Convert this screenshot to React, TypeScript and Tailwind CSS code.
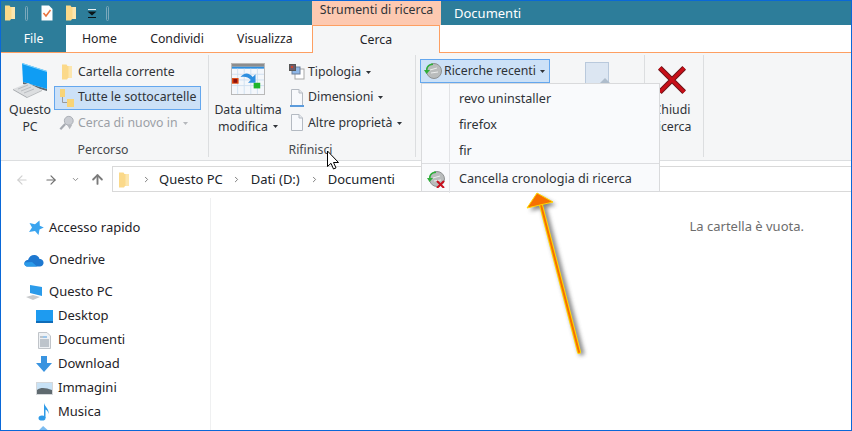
import type { ReactNode } from "react";
import { ArrowLeft, ArrowRight, ArrowUp, ChevronDown, ChevronRight } from "lucide-react";

function FolderIcon({ className = "w-[12px] h-[16px]" }: { className?: string }) {
  return (
    <svg viewBox="0 0 12 16" className={className} aria-hidden="true">
      <path d="M1 0.5 L5.5 0.5 L6.5 2 L11 2 L11 14 L7 14 L6 15.5 L1 15.5 Z" fill="#fbd98a" />
      <path d="M7.5 2 L11 2 L11 14 L7.5 14 Z" fill="#fce6ae" />
    </svg>
  );
}

function Caret({ className = "" }: { className?: string }) {
  return (
    <svg viewBox="0 0 5 3" className={`w-[5px] h-[3px] ${className}`} aria-hidden="true">
      <path d="M0 0 H5 L2.5 3 Z" fill="currentColor" />
    </svg>
  );
}

function PcIcon() {
  return (
    <svg viewBox="0 0 36 36" className="w-[36px] h-[36px]" aria-hidden="true">
      <path d="M11 20 L35 27 L35 29 L11 22 Z" fill="#5f6a72" />
      <path d="M10 1 L35 9 L35 27 L11 20 Z" fill="#0f9df4" />
      <path d="M10 1 L35 9 L35 10 L10 2 Z" fill="#8ad6fb" />
      <path d="M1 27 L16 21 L30 28 L15 35 Z" fill="#dcdee0" />
      <path d="M1 27 L15 35 L15 36 L1 28 Z" fill="#a3a7ab" />
      <path d="M15 35 L30 28 L30 29 L15 36 Z" fill="#b6b9bc" />
      <path d="M6 27 L16 23 M9 29 L19 25 M12 31 L22 27" stroke="#b9bcc0" strokeWidth="1" />
    </svg>
  );
}

function SubfoldersIcon() {
  return (
    <svg viewBox="0 0 16 20" className="w-[16px] h-[20px]" aria-hidden="true">
      <path d="M1 1 H6 V9 H1 Z" fill="#f8d477" />
      <path d="M8 11 H15 V19 H8 Z" fill="#f8d477" />
      <path d="M3.5 9 V14.5 H8" fill="none" stroke="#9a9a9a" strokeWidth="1" />
    </svg>
  );
}

function SearchAgainIcon() {
  return (
    <svg viewBox="0 0 18 18" className="w-[18px] h-[18px]" aria-hidden="true">
      <circle cx="11" cy="6.5" r="5" fill="#c9ccd2" stroke="#a5a9b0" />
      <path d="M7 10 L1.5 16" stroke="#a5a9b0" strokeWidth="2.5" />
      <path d="M9 11 H15 L12 16 Z" fill="#b4b7bd" />
    </svg>
  );
}

function CalendarIcon() {
  return (
    <svg viewBox="0 0 36 34" className="w-[34px] h-[32px] shrink-0" aria-hidden="true">
      <rect x="0.5" y="0.5" width="35" height="33" fill="#f4f7fb" stroke="#b5b5b5" />
      <rect x="1" y="1" width="34" height="3" fill="#8d8d8d" />
      <rect x="1" y="4" width="34" height="2" fill="#2e8fe0" />
      <path d="M1 12 H35 M1 18 H35 M1 24 H35 M7 6 V33 M14 6 V33 M21 6 V33 M28 6 V33" stroke="#cfe0f0" strokeWidth="1" />
      <rect x="1" y="16" width="7" height="6" fill="#e04a10" />
      <rect x="2.5" y="17" width="4" height="4" fill="#8a1010" />
      <rect x="24" y="21" width="7" height="6" fill="#1eb52a" />
      <path d="M10 15 C14 10 19 10 23 15 L26 12 L26 21 L18 21 L21 18 C18 15 15 14 10 15 Z" fill="#2e8fe0" />
    </svg>
  );
}

function TypeIcon() {
  return (
    <svg viewBox="0 0 16 16" className="w-[16px] h-[16px]" aria-hidden="true">
      <rect x="6" y="5" width="9" height="10" fill="#fff" stroke="#a8a8a8" />
      <rect x="3" y="3" width="8" height="7" fill="#8fb8e8" stroke="#6d7f99" />
      <rect x="0.5" y="0.5" width="6" height="6" fill="#6f5a6a" stroke="#555" />
      <rect x="2" y="2" width="2" height="2" fill="#d0462a" />
    </svg>
  );
}

function PageIcon({ bar }: { bar?: boolean }) {
  return (
    <svg viewBox="0 0 14 18" className="w-[14px] h-[18px]" aria-hidden="true">
      <path d="M1.5 0.5 H9 L12.5 4 V16.5 H1.5 Z" fill="#f7f9fc" stroke="#b4bac2" />
      <path d="M9 0.5 V4 H12.5" fill="#e3e7ec" stroke="#b4bac2" />
      {bar && <rect x="0" y="16" width="14" height="2" fill="#5b9bdc" />}
    </svg>
  );
}

function HistoryIcon({ cross }: { cross?: boolean }) {
  return (
    <svg viewBox="0 0 18 18" className="w-[18px] h-[18px] shrink-0" aria-hidden="true">
      <circle cx="10" cy="9" r="7.5" fill="#b9bcbc" stroke="#8f9292" />
      <path d="M6 8 L13 6 M7 11 L14 10" stroke="#eceded" strokeWidth="1" />
      <path d="M9 3 C5 3 3.5 6 3.5 8 L6 8 L2.5 12 L0 8 L2 8 C2 4 5 1.5 9 1.5 Z" fill="#2fae3a" />
      {cross && <path d="M10 11 L17 18 M17 11 L10 18" stroke="#c8101e" strokeWidth="2" />}
    </svg>
  );
}

function CloseIcon() {
  return (
    <svg viewBox="0 0 32 32" className="w-[30px] h-[30px]" aria-hidden="true">
      <path d="M3 3 L29 29 M29 3 L3 29" stroke="#6d1418" strokeWidth="5.5" />
      <path d="M3 3 L29 29 M29 3 L3 29" stroke="#c80f18" strokeWidth="3.5" />
    </svg>
  );
}

function ArrowOverlay() {
  return (
    <svg viewBox="0 0 852 431" className="absolute -left-px -top-px w-[852px] h-[431px] pointer-events-none" aria-hidden="true">
      <defs>
        <filter id="arrow-blur" x="-50%" y="-20%" width="200%" height="140%">
          <feGaussianBlur stdDeviation="2.2" />
        </filter>
      </defs>
      <g filter="url(#arrow-blur)" opacity="0.75" transform="translate(3 3)">
        <path d="M579 352 L541 205" stroke="#555" strokeWidth="5" fill="none" />
        <path d="M537 193 L527 208 L553 202 Z" fill="#555" />
      </g>
      <path d="M579 352 L541 205" stroke="#ffd800" strokeWidth="4" fill="none" strokeLinecap="round" />
      <path d="M579 352 L541 205" stroke="#f77000" strokeWidth="2" fill="none" strokeLinecap="round" />
      <path d="M537 193 L527 208 L553 202 Z" fill="#f77000" stroke="#ffd800" strokeWidth="1" />
    </svg>
  );
}

function Cursor() {
  return (
    <svg viewBox="0 0 13 20" className="absolute left-[326px] top-[149px] w-[13px] h-[21px] pointer-events-none" aria-hidden="true">
      <path d="M0.5 0.5 L0.5 16 L4 12.8 L6.5 18.5 L9 17.4 L6.5 12 L11.5 12 Z" fill="#fff" stroke="#000" strokeWidth="1" />
    </svg>
  );
}

function Group({ label, width, labelPad = "", children }: { label: string; width: string; labelPad?: string; children: ReactNode }) {
  return (
    <div className={`flex flex-col shrink-0 h-[102px] border-r border-[#dcdee0] ${width}`}>
      <div className="flex h-[87px] pt-[3px]">{children}</div>
      <div className={`text-center text-[#45484c] h-[15px] leading-[15px] ${labelPad}`}>{label}</div>
    </div>
  );
}

function SmallRow({ icon, children, muted }: { icon: ReactNode; children: ReactNode; muted?: boolean }) {
  return (
    <div className={`flex items-center h-[24px] px-[4px] gap-[3px] whitespace-nowrap border border-transparent ${muted ? "text-[#9ba0a6]" : "text-[#2f3338]"}`}>
      <span className="w-[16px] flex justify-center">{icon}</span>
      {children}
    </div>
  );
}

function NavItem({ icon, label, child }: { icon: ReactNode; label: string; child?: boolean }) {
  return (
    <li className={`flex items-center h-[24px] ${child ? "pl-[34px] gap-[5px]" : "pl-[24px] gap-[6px]"}`}>
      <span className="w-[18px] flex justify-center">{icon}</span>
      <span>{label}</span>
    </li>
  );
}

export default function App() {
  return (
    <div className="relative w-[852px] h-[431px] overflow-hidden bg-white border border-[#0a68d8] text-[12.3px] text-[#1f2328] font-['Noto_Sans',sans-serif]">
      {/* title bar */}
      <div className="flex h-[24px] bg-[#2d7d9a]">
        <div className="flex items-center w-[311px] pl-[3px]">
          <FolderIcon />
          <span className="ml-[9px] w-[3px] h-[15px] border border-[#7aa8bc] rounded-sm" />
          <svg viewBox="0 0 12 16" className="ml-[13px] w-[12px] h-[16px]" aria-hidden="true">
            <path d="M0.5 0.5 H8 L11.5 4 V15.5 H0.5 Z" fill="#fdfdfd" />
            <path d="M2.5 8 L5 11 L9.5 5" stroke="#e8703a" strokeWidth="1.5" fill="none" />
          </svg>
          <span className="ml-[12px]"><FolderIcon /></span>
          <svg viewBox="0 0 10 9" className="ml-[10px] w-[10px] h-[9px]" aria-hidden="true">
            <path d="M1 0.5 H9" stroke="#e6eef2" />
            <path d="M0.5 2.5 H9.5 L5 6.5 Z" fill="#0b1418" />
            <path d="M1 8.5 H9" stroke="#0b1418" />
          </svg>
          <span className="ml-[9px] w-[3px] h-[15px] border border-[#7aa8bc] rounded-sm" />
        </div>
        <div className="w-[129px] bg-[#fdc9b1] text-center leading-[18px] text-[#2f3338]">Strumenti di ricerca</div>
        <div className="ml-[13px] text-white leading-[24px] text-[13px]">Documenti</div>
      </div>

      {/* tabs */}
      <div className="flex h-[28px] border-b border-[#fd9f62]">
        <div className="w-[65px] bg-[#2d7d9a] text-white text-center leading-[28px]">File</div>
        <div className="w-[67px] text-center leading-[28px]">Home</div>
        <div className="w-[88px] text-center leading-[28px]">Condividi</div>
        <div className="w-[91px] text-left pl-[16px] leading-[28px]">Visualizza</div>
        <div className="w-[128px] h-[28px] bg-[#f5f6f7] border-x border-t border-[#fd9f62] text-center leading-[27px]">Cerca</div>
      </div>

      {/* ribbon */}
      <div className="flex h-[108px] bg-[#f5f6f7] border-b border-[#dcdee0] pt-[2px]">
        <Group label="Percorso" width="w-[208px]" labelPad="pr-[3px]">
          <div className="w-[58px] shrink-0 flex flex-col items-center pt-[4px]">
            <PcIcon />
            <div className="text-center leading-[17px] mt-[3px] text-[#2f3338]">Questo<br />PC</div>
          </div>
          <div className="flex flex-col gap-[1.5px] pt-[2px] -ml-[5px]">
            <SmallRow icon={<FolderIcon />}>Cartella corrente</SmallRow>
            <div className="flex items-center w-[147px] h-[24px] px-[4px] gap-[3px] whitespace-nowrap bg-[#cce1f7] border border-[#64a7ee] text-[#2f3338]">
              <span className="w-[16px] flex justify-center"><SubfoldersIcon /></span>
              Tutte le sottocartelle
            </div>
            <SmallRow muted icon={<SearchAgainIcon />}>
              <span className="flex items-center gap-[5px]">Cerca di nuovo in <Caret className="text-[#b5b8bc]" /></span>
            </SmallRow>
          </div>
        </Group>

        <Group label="Rifinisci" width="w-[207px]" labelPad="pr-[3px]">
          <div className="w-[78px] shrink-0 flex flex-col items-center pt-[5px] text-[#2f3338]">
            <CalendarIcon />
            <div className="text-center leading-[17px] mt-[6px] whitespace-nowrap">Data ultima<br />modifica <Caret className="ml-[2px] mb-[2px] inline-block" /></div>
          </div>
          <div className="flex flex-col gap-[1.5px] pt-[2px] -ml-[3px]">
            <SmallRow icon={<TypeIcon />}><span className="flex items-center gap-[5px]">Tipologia <Caret /></span></SmallRow>
            <SmallRow icon={<PageIcon bar />}><span className="flex items-center gap-[5px]">Dimensioni <Caret /></span></SmallRow>
            <SmallRow icon={<PageIcon />}><span className="flex items-center gap-[5px]">Altre proprietà <Caret /></span></SmallRow>
          </div>
        </Group>

        <Group label="" width="w-[229px]">
          <div className="flex flex-col pl-[4px] pt-[1px] w-full">
            <div className="flex items-center self-start h-[24px] w-[130px] pl-[3px] gap-[2px] whitespace-nowrap bg-[#cce1f7] border border-[#64a7ee] text-[#2f3338]">
              <HistoryIcon />
              <span className="flex items-center gap-[4px]">Ricerche recenti <Caret /></span>
            </div>
          </div>
          <div className="absolute left-[584px] top-[61px] w-[24px] h-[30px] bg-[#dce6f2] border border-[#b9c9dc]">
            <div className="absolute left-[13px] top-[15px] border-x-[6px] border-b-[6px] border-x-transparent border-b-[#aebccb]" />
          </div>
        </Group>

        <Group label="" width="w-[59px]">
          <div className="flex flex-col items-center w-full pt-[7px] pr-[4px]">
            <CloseIcon />
            <div className="text-center leading-[17px] mt-[6px] text-[#2f3338]">Chiudi<br />ricerca</div>
          </div>
        </Group>
      </div>

      {/* address bar */}
      <div className="flex h-[37px] pt-[5px] text-[13px]">
        <div className="flex items-center h-[26px] w-[111px] pt-[1px] pl-[14px] text-[#7a7a7a]">
          <ArrowLeft className="w-[14px] h-[14px] text-[#d0d0d0]" strokeWidth={2} />
          <ArrowRight className="ml-[15px] w-[14px] h-[14px] text-[#6f6f6f]" strokeWidth={2} />
          <ChevronDown className="ml-[13px] w-[9px] h-[9px] text-[#8a8a8a]" strokeWidth={2.5} />
          <ArrowUp className="ml-[10px] w-[15px] h-[15px] text-[#7a7a7a]" strokeWidth={3} />
        </div>
        <div className="flex-1 flex items-center h-[26px] pt-[1px] border-l border-y border-[#d9d9d9] pl-[5px] text-[#20242a]">
          <FolderIcon />
          <ChevronRight className="ml-[12px] w-[9px] h-[9px] text-[#777]" strokeWidth={2.5} />
          <span className="ml-[8px]">Questo PC</span>
          <ChevronRight className="ml-[9px] w-[9px] h-[9px] text-[#777]" strokeWidth={2.5} />
          <span className="ml-[10px]">Dati (D:)</span>
          <ChevronRight className="ml-[10px] w-[9px] h-[9px] text-[#777]" strokeWidth={2.5} />
          <span className="ml-[9px]">Documenti</span>
        </div>
      </div>

      {/* body */}
      <div className="flex h-[232px] text-[13px]">
        <div className="w-[210px] h-full border-r border-[#eff0f1] pt-[18px] overflow-hidden">
          <ul>
            <NavItem label="Accesso rapido" icon={
              <svg viewBox="0 0 16 16" className="w-[16px] h-[16px] ml-[4px] shrink-0" aria-hidden="true">
                <path d="M11.5 0.5 L11.8 5.8 L15.8 7.5 L11.5 9.5 L10.5 15 L7 11 L1 12 L4 7.5 L1.5 3 L7 4.2 Z" fill="#3aa4ef" />
              </svg>
            } />
            <li className="h-[8px]" />
            <NavItem label="Onedrive" icon={
              <svg viewBox="0 0 20 13" className="w-[20px] h-[13px] shrink-0" aria-hidden="true">
                <path d="M4 12.5 C1 12.5 0 10.5 0.5 8.5 C1 6.5 3 6 4 6 C5 2.5 8 0.5 11 1 C13.5 1.5 15 3 15.5 5 C18 5 20 7 19.5 9.5 C19 11.5 17.5 12.5 16 12.5 Z" fill="#1e78d0" />
                <path d="M4 12.5 C1 12.5 0 10.5 0.5 8.5 L8 8 L13 12.5 Z" fill="#2b9bea" />
              </svg>
            } />
            <li className="h-[8px]" />
            <NavItem label="Questo PC" icon={
              <svg viewBox="0 0 18 16" className="w-[18px] h-[16px]" aria-hidden="true">
                <path d="M5 1 L17 3 L17 12 L5 9 Z" fill="#2b9bea" />
                <path d="M1 13 L8 11 L15 13 L8 16 Z" fill="#c8cacc" />
              </svg>
            } />
            <NavItem child label="Desktop" icon={
              <svg viewBox="0 0 17 13" className="w-[17px] h-[13px]" aria-hidden="true">
                <rect width="17" height="13" fill="#1e9bf0" />
                <rect y="11" width="17" height="2" fill="#0f6cb8" />
              </svg>
            } />
            <NavItem child label="Documenti" icon={
              <svg viewBox="0 0 13 17" className="w-[13px] h-[17px]" aria-hidden="true">
                <path d="M0.5 0.5 H9 L12.5 4 V16.5 H0.5 Z" fill="#eef1f4" stroke="#c0c4c9" />
                <path d="M2 5 H5 M2 8 H11 M2 10 H11 M2 12 H11 M2 14 H11" stroke="#8c97a3" />
                <path d="M5 5 H9" stroke="#4b9ae0" />
              </svg>
            } />
            <NavItem child label="Download" icon={
              <svg viewBox="0 0 16 16" className="w-[16px] h-[16px]" aria-hidden="true">
                <path d="M5 0 H11 V7 H16 L8 16 L0 7 H5 Z" fill="#3a94e0" />
              </svg>
            } />
            <NavItem child label="Immagini" icon={
              <svg viewBox="0 0 17 13" className="w-[17px] h-[13px]" aria-hidden="true">
                <rect width="17" height="13" fill="#d5d8db" />
                <rect x="1" y="1" width="15" height="11" fill="#c8e2f6" />
                <path d="M1 8 C5 5 10 6 16 8 V12 H1 Z" fill="#5f6a6f" />
              </svg>
            } />
            <NavItem child label="Musica" icon={
              <svg viewBox="0 0 12 18" className="w-[12px] h-[18px]" aria-hidden="true">
                <ellipse cx="4" cy="15" rx="3.5" ry="2.6" fill="#2f9be8" />
                <path d="M6 15 V0 C7 4 11.5 6 10.5 11 C10 8 8.5 7 7.5 6.5 V15 Z" fill="#2f9be8" />
              </svg>
            } />
            <li className="pl-[34px] pt-[2px]">
              <svg viewBox="0 0 18 8" className="ml-[1px] w-[16px] h-[7px]" aria-hidden="true">
                <path d="M0 8 L8 0 L17 8 Z" fill="#7cbcf0" />
              </svg>
            </li>
          </ul>
        </div>
        <div className="flex-1 flex justify-end pt-[19px] pr-[47px] text-[#6d6d6d]">La cartella è vuota.</div>
      </div>

      {/* recent searches menu */}
      <div className="absolute left-[420px] top-[82px] w-[239px] h-[109px] bg-[#f9fafc] border border-[#d9dadc] flex flex-col text-[#2f3338] text-[12.6px]">
        <div className="flex h-[80px] border-b border-[#dcdde0]">
          <div className="w-[28px] border-r border-[#e2e3e6] mb-[1px]" />
          <div className="pl-[9px] pt-[2px]">
            <div className="h-[26px] leading-[26px]">revo uninstaller</div>
            <div className="h-[26px] leading-[26px]">firefox</div>
            <div className="h-[26px] leading-[26px]">fir</div>
          </div>
        </div>
        <div className="flex flex-1">
          <div className="w-[28px] border-r border-[#e2e3e6] flex items-center justify-center"><HistoryIcon cross /></div>
          <div className="pl-[9px] leading-[29px]">Cancella cronologia di ricerca</div>
        </div>
      </div>

      <Cursor />
      <ArrowOverlay />
    </div>
  );
}
